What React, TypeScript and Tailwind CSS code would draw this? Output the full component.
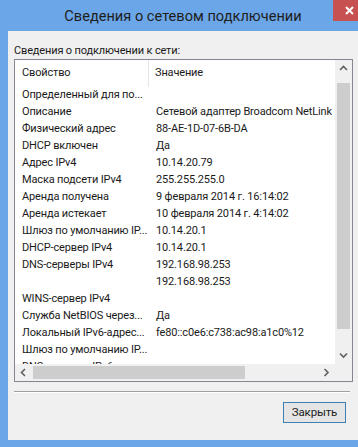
import React from "react";

type Row = { name: string; value: string };

const rows: Row[] = [
  { name: "Определенный для по...", value: "" },
  { name: "Описание", value: "Сетевой адаптер Broadcom NetLink" },
  { name: "Физический адрес", value: "88-AE-1D-07-6B-DA" },
  { name: "DHCP включен", value: "Да" },
  { name: "Адрес IPv4", value: "10.14.20.79" },
  { name: "Маска подсети IPv4", value: "255.255.255.0" },
  { name: "Аренда получена", value: "9 февраля 2014 г. 16:14:02" },
  { name: "Аренда истекает", value: "10 февраля 2014 г. 4:14:02" },
  { name: "Шлюз по умолчанию IP...", value: "10.14.20.1" },
  { name: "DHCP-сервер IPv4", value: "10.14.20.1" },
  { name: "DNS-серверы IPv4", value: "192.168.98.253" },
  { name: "", value: "192.168.98.253" },
  { name: "WINS-сервер IPv4", value: "" },
  { name: "Служба NetBIOS черeз...", value: "Да" },
  { name: "Локальный IPv6-адрес...", value: "fe80::c0e6:c738:ac98:a1c0%12" },
  { name: "Шлюз по умолчанию IP...", value: "" },
  { name: "DNS-серверы IPv6", value: "" },
];

function Chevron({ dir }: { dir: "up" | "down" | "left" | "right" }) {
  const d = {
    up: "M1 5 L4.5 1.5 L8 5",
    down: "M1 1.5 L4.5 5 L8 1.5",
    left: "M5 1 L1.5 4.5 L5 8",
    right: "M1.5 1 L5 4.5 L1.5 8",
  }[dir];
  const horiz = dir === "up" || dir === "down";
  return (
    <svg width={horiz ? 9 : 7} height={horiz ? 7 : 9} viewBox={horiz ? "0 0 9 7" : "0 0 7 9"}>
      <path d={d} fill="none" stroke="#606060" strokeWidth="1.6" />
    </svg>
  );
}

export default function App() {
  return (
    <div className="w-[358px] h-[447px] bg-[#6ba6e8] flex flex-col overflow-hidden font-['Roboto',sans-serif] text-[11px] tracking-[-0.15px] text-[#1a1a1a]">
      {/* title bar */}
      <div className="h-[31px] shrink-0 flex items-start relative">
        <div className="flex-1 text-center text-[14.6px] tracking-normal leading-[20px] pt-[6px] pl-[8px] text-[#1e1e1e]">
          Сведения о сетевом подключении
        </div>
        <div className="absolute left-[333px] top-0 w-[32px] h-[21px] bg-[#c75050] flex items-center justify-center">
          <svg width="9" height="9" viewBox="0 0 9 9">
            <path d="M1 1 L8 8 M8 1 L1 8" stroke="#fff" strokeWidth="2" />
          </svg>
        </div>
      </div>

      {/* client area */}
      <div className="flex-1 ml-[8px] mb-[7px] bg-[#f0f0f0] flex flex-col">
        <div className="pt-[12px] pl-[6px] h-[28px] leading-[16px]">Сведения о подключении к сети:</div>

        <div className="ml-[6px] w-[339px] h-[323px] border border-[#828790] bg-white grid grid-cols-[1fr_17px] grid-rows-[1fr_17px]">
          {/* list viewport */}
          <div className="overflow-hidden">
            <div className="h-[27px] flex items-center">
              <div className="w-[134px] pl-[7px] h-full flex items-center border-r border-[#e5e5e5]">Свойство</div>
              <div className="pl-[6px]">Значение</div>
            </div>
            {rows.map((r, i) => (
              <div key={i} className="h-[17px] flex items-center whitespace-nowrap">
                <div className="w-[134px] shrink-0 pl-[7px] overflow-hidden">{r.name}</div>
                <div className="pl-[7px]">{r.value}</div>
              </div>
            ))}
          </div>

          {/* vertical scrollbar */}
          <div className="bg-[#f0f0f0] flex flex-col">
            <div className="h-[17px] flex items-center justify-center">
              <Chevron dir="up" />
            </div>
            <div className="flex-1 flex flex-col px-[2px] pt-[6px] pb-[18px]">
              <div className="flex-1 bg-[#cdcdcd]" />
            </div>
            <div className="h-[17px] flex items-center justify-center">
              <Chevron dir="down" />
            </div>
          </div>

          {/* horizontal scrollbar */}
          <div className="bg-[#f0f0f0] flex">
            <div className="w-[17px] flex items-center justify-center">
              <Chevron dir="left" />
            </div>
            <div className="flex-1 flex py-[2px] pl-[1px]">
              <div className="w-[212px] bg-[#cdcdcd]" />
            </div>
            <div className="w-[17px] flex items-center justify-center">
              <Chevron dir="right" />
            </div>
          </div>
          <div className="bg-[#f0f0f0]" />
        </div>

        {/* separator */}
        <div className="mt-[9px] ml-[6px] w-[336px] border-t border-[#a0a0a0] border-b border-b-white" />

        <div className="flex justify-end pr-[12px] pt-[9px]">
          <button className="w-[63px] h-[21px] border border-[#3c7fb1] bg-[#e5e5e5] text-[11.5px] leading-none text-[#1a1a1a]">
            Закрыть
          </button>
        </div>
      </div>
    </div>
  );
}
